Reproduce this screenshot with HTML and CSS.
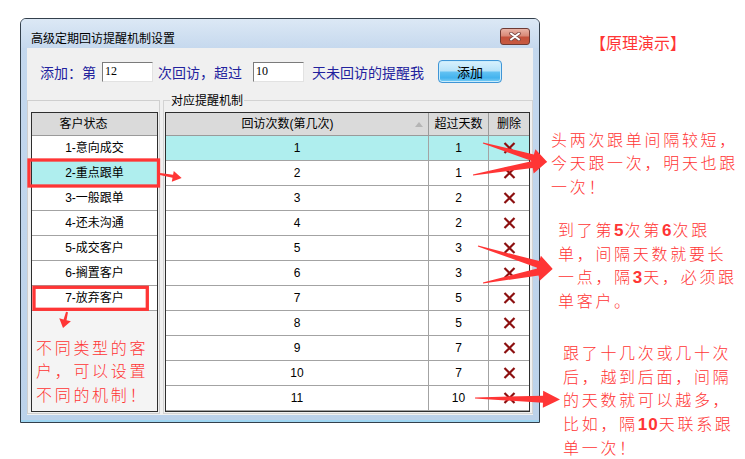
FILE: index.html
```html
<!DOCTYPE html>
<html lang="zh-CN">
<head>
    <meta charset="UTF-8">
    <title>高级定期回访提醒机制设置</title>
    <link rel="stylesheet" href="styles.css">
</head>
<body>
<div class="page">
    <div class="window">
        <div class="titlebar">
            <span class="title">高级定期回访提醒机制设置</span>
            <span class="close-btn">
                <svg width="12" height="9" viewBox="0 0 12 9">
                    <path d="M2 1.5L10 7.5M10 1.5L2 7.5" stroke="#7d4a44" stroke-width="3.6" stroke-linecap="round"/>
                    <path d="M2 1.5L10 7.5M10 1.5L2 7.5" stroke="#fff" stroke-width="2" stroke-linecap="round"/>
                </svg>
            </span>
        </div>
        <div class="client">
            <div class="add-row">
                <span>添加：第</span>
                <input class="num-input first" type="text" value="12">
                <span class="gap-a">次回访，超过</span>
                <input class="num-input second" type="text" value="10">
                <span class="gap-b">天未回访的提醒我</span>
                <button class="add-btn">添加</button>
            </div>
            <div class="panels">
                <div class="status-panel">
                    <div class="listbox">
                        <div class="lb-head">客户状态</div>
                        <div class="lb-row">1-意向成交</div>
                        <div class="lb-row selected">2-重点跟单</div>
                        <div class="lb-row">3-一般跟单</div>
                        <div class="lb-row">4-还未沟通</div>
                        <div class="lb-row">5-成交客户</div>
                        <div class="lb-row">6-搁置客户</div>
                        <div class="lb-row">7-放弃客户</div>
                        <div class="tip left-tip">不同类型的客<br>户，可以设置<br>不同的机制！</div>
                    </div>
                </div>
                <div class="group">
                    <span class="group-label">对应提醒机制</span>
                    <div class="grid">
                        <div class="grid-head">
                            <div class="cell sort-cell"><span class="head-text">回访次数(第几次)</span><span class="sort"></span></div>
                            <div class="cell">超过天数</div>
                            <div class="cell">删除</div>
                        </div>
                        <div class="grid-row selected"><div class="cell">1</div><div class="cell">1</div><div class="cell"><svg class="del" viewBox="0 0 13 12"><path d="M1.5 1L11.5 11M11.5 1L1.5 11"/></svg></div></div>
                        <div class="grid-row"><div class="cell">2</div><div class="cell">1</div><div class="cell"><svg class="del" viewBox="0 0 13 12"><path d="M1.5 1L11.5 11M11.5 1L1.5 11"/></svg></div></div>
                        <div class="grid-row"><div class="cell">3</div><div class="cell">2</div><div class="cell"><svg class="del" viewBox="0 0 13 12"><path d="M1.5 1L11.5 11M11.5 1L1.5 11"/></svg></div></div>
                        <div class="grid-row"><div class="cell">4</div><div class="cell">2</div><div class="cell"><svg class="del" viewBox="0 0 13 12"><path d="M1.5 1L11.5 11M11.5 1L1.5 11"/></svg></div></div>
                        <div class="grid-row"><div class="cell">5</div><div class="cell">3</div><div class="cell"><svg class="del" viewBox="0 0 13 12"><path d="M1.5 1L11.5 11M11.5 1L1.5 11"/></svg></div></div>
                        <div class="grid-row"><div class="cell">6</div><div class="cell">3</div><div class="cell"><svg class="del" viewBox="0 0 13 12"><path d="M1.5 1L11.5 11M11.5 1L1.5 11"/></svg></div></div>
                        <div class="grid-row"><div class="cell">7</div><div class="cell">5</div><div class="cell"><svg class="del" viewBox="0 0 13 12"><path d="M1.5 1L11.5 11M11.5 1L1.5 11"/></svg></div></div>
                        <div class="grid-row"><div class="cell">8</div><div class="cell">5</div><div class="cell"><svg class="del" viewBox="0 0 13 12"><path d="M1.5 1L11.5 11M11.5 1L1.5 11"/></svg></div></div>
                        <div class="grid-row"><div class="cell">9</div><div class="cell">7</div><div class="cell"><svg class="del" viewBox="0 0 13 12"><path d="M1.5 1L11.5 11M11.5 1L1.5 11"/></svg></div></div>
                        <div class="grid-row"><div class="cell">10</div><div class="cell">7</div><div class="cell"><svg class="del" viewBox="0 0 13 12"><path d="M1.5 1L11.5 11M11.5 1L1.5 11"/></svg></div></div>
                        <div class="grid-row"><div class="cell">11</div><div class="cell">10</div><div class="cell"><svg class="del" viewBox="0 0 13 12"><path d="M1.5 1L11.5 11M11.5 1L1.5 11"/></svg></div></div>
                    </div>
                </div>
            </div>
        </div>
    </div>

    <div class="notes">
        <div class="note-title">【原理演示】</div>
        <div class="tip note-1">头两次跟单间隔较短，<br>今天跟一次，明天也跟<br>一次！</div>
        <div class="tip note-2">到了第<b>5</b>次第<b>6</b>次跟<br>单，间隔天数就要长<br>一点，隔<b>3</b>天，必须跟<br>单客户。</div>
        <div class="tip note-3">跟了十几次或几十次<br>后，越到后面，间隔<br>的天数就可以越多，<br>比如，隔<b>10</b>天联系跟<br>单一次！</div>
    </div>

    <!-- 标注层：红框和箭头 -->
    <svg class="marks" width="745" height="459" viewBox="0 0 745 459">
        <g fill="none" stroke="#ff3535" stroke-width="3.3">
            <rect x="29" y="160" width="129.5" height="26"/>
            <rect x="34" y="287.3" width="113.3" height="22"/>
        </g>
        <g fill="#ff3535">
            <path transform="translate(160,174) rotate(10.3)" d="M0,-1 L13,-1.5 L13,-5.5 L22,0 L13,5.5 L13,1.5 L0,1Z"/>
            <path transform="translate(67,312) rotate(104)" d="M0,-1 L8,-1.5 L8,-6 L16.5,0 L8,6 L8,1.5 L0,1Z"/>
            <path transform="translate(483,143) rotate(16.5)" d="M0,-0.5 L52,-3.5 L52,-9 L67,0 L52,9 L52,3.5 L0,0.5Z"/>
            <path transform="translate(473,175) rotate(-10)" d="M0,-0.5 L60,-3.5 L60,-9 L75,0 L60,9 L60,3.5 L0,0.5Z"/>
            <path transform="translate(478,246) rotate(17)" d="M0,-0.5 L63,-3.5 L63,-9 L78,0 L63,9 L63,3.5 L0,0.5Z"/>
            <path transform="translate(483,283) rotate(-11.3)" d="M0,-0.5 L56,-3.5 L56,-9 L71,0 L56,9 L56,3.5 L0,0.5Z"/>
            <path transform="translate(475,398) rotate(1)" d="M0,-0.5 L68,-3.5 L68,-8.5 L85,0 L68,8.5 L68,3.5 L0,0.5Z"/>
        </g>
    </svg>
</div>
</body>
</html>
```

FILE: styles.css
```css
body {
    margin: 0;
    background-color: #fff;
    font-family: "Liberation Sans", "Noto Sans CJK SC", sans-serif;
}
.page {
    position: relative;
    display: flex;
    width: 745px;
    height: 459px;
    padding: 18px 0 0 20px;
    box-sizing: border-box;
    overflow: hidden;
}
.window {
    width: 520px;
    height: 405px;
    box-sizing: border-box;
    border: 1px solid #33404c;
    border-radius: 6px 6px 0 0;
    background: linear-gradient(#c4d8ee, #bcd2ea);
    box-shadow: inset 0 -2px 0 #9fd6f2;
    display: flex;
    flex-direction: column;
}
.titlebar {
    height: 29px;
    box-sizing: border-box;
    display: flex;
    justify-content: space-between;
    align-items: flex-start;
    padding: 9px 9px 0 10px;
    border-radius: 5px 5px 0 0;
    background: linear-gradient(#dce8f5, #c6d9ee);
}
.title {
    margin-top: 3px;
    font-family: "Noto Sans CJK SC", sans-serif;
    font-size: 12px;
    line-height: 14px;
    color: #000;
}
.close-btn {
    width: 30px;
    height: 17px;
    box-sizing: border-box;
    border: 1px solid #6e3a34;
    border-radius: 3px;
    background: linear-gradient(#e9b3a6 0%, #d98a78 45%, #c4513c 55%, #c75a40 100%);
    display: flex;
    align-items: center;
    justify-content: center;
}
.client {
    margin: 0 6px;
    height: 367px;
    box-sizing: border-box;
    padding-top: 12px;
    background-color: #f0f0f0;
}
.add-row {
    display: flex;
    align-items: center;
    height: 23px;
    padding-left: 13px;
    font-family: "Noto Sans CJK SC", sans-serif;
    font-size: 14px;
    color: #22229e;
    white-space: nowrap;
}
.num-input {
    width: 51px;
    height: 20px;
    box-sizing: border-box;
    margin: 0;
    padding: 0 0 0 2px;
    border: 1px solid #e2e2e2;
    border-top-color: #7b7b7b;
    border-left-color: #7b7b7b;
    background: #fff;
    font-family: "Liberation Serif", serif;
    font-size: 12px;
    color: #000;
    outline: none;
}
.num-input.first {
    margin-left: 6px;
}
.gap-a {
    margin-left: 5px;
}
.num-input.second {
    margin-left: 11px;
}
.gap-b {
    margin-left: 8px;
}
.add-btn {
    margin-left: 14px;
    width: 64px;
    height: 23px;
    box-sizing: border-box;
    padding: 0;
    border: 1px solid #3f95d6;
    border-radius: 4px;
    background: linear-gradient(#d9f1fd 0%, #b9e4fa 45%, #5fc0f2 55%, #44b3ee 80%, #7fcff6 100%);
    box-shadow: inset 0 0 0 1px #c9ecfc;
    font-family: "Noto Sans CJK SC", sans-serif;
    font-size: 13px;
    color: #000;
}
.panels {
    display: flex;
    gap: 3px;
    margin-top: 17px;
    height: 314px;
}
.status-panel {
    width: 133px;
    box-sizing: border-box;
    border: 1px solid #cfcfcf;
    padding: 11px 1px 1px 3px;
}
.listbox {
    width: 127px;
    height: 300px;
    box-sizing: border-box;
    border: 1px solid #2e2e2e;
    background-color: #f4f4f4;
}
.lb-head {
    height: 23px;
    box-sizing: border-box;
    padding-right: 22px;
    border-bottom: 1px solid #9a9a9a;
    background-color: #dadada;
    font-size: 12px;
    line-height: 22px;
    text-align: center;
    color: #000;
}
.lb-row {
    height: 25px;
    box-sizing: border-box;
    border-bottom: 1px solid #a3a3a3;
    background-color: #fff;
    font-size: 12px;
    line-height: 24px;
    text-align: center;
    color: #000;
}
.lb-row.selected,
.grid-row.selected {
    background-color: #afeeee;
}
.tip {
    font-family: "Noto Sans CJK SC", sans-serif;
    font-weight: 300;
    font-size: 16px;
    line-height: 23.5px;
    letter-spacing: 2.7px;
    color: #ff3535;
    white-space: nowrap;
}
.tip b {
    font-family: "Liberation Sans", sans-serif;
    font-weight: bold;
    font-size: 17px;
    letter-spacing: 1px;
}
.left-tip {
    margin-top: 24.75px;
    padding-left: 4px;
}
.group {
    width: 370px;
    box-sizing: border-box;
    border: 1px solid #d3d3d3;
    padding: 0 2px 1px 1px;
    display: flex;
    flex-direction: column;
    align-items: flex-start;
}
.group-label {
    margin: -7px 0 0 5px;
    padding: 0 1px;
    background-color: #f0f0f0;
    font-family: "Noto Sans CJK SC", sans-serif;
    font-size: 12px;
    line-height: 12px;
    color: #000;
}
.grid {
    margin-top: 6px;
    width: 365px;
    height: 300px;
    box-sizing: border-box;
    border: 1px solid #2e2e2e;
    background-color: #fff;
}
.grid-head,
.grid-row {
    display: grid;
    grid-template-columns: 263px 60px 40px;
    box-sizing: border-box;
    font-size: 12px;
    color: #000;
}
.grid-head {
    height: 23px;
    border-bottom: 1px solid #9a9a9a;
    background-color: #dadada;
    line-height: 22px;
}
.grid-row {
    height: 25px;
    border-bottom: 1px solid #a3a3a3;
    line-height: 24px;
}
.cell {
    display: flex;
    align-items: center;
    justify-content: center;
    border-right: 1px solid #a3a3a3;
}
.cell:last-child {
    border-right: none;
}
.grid-head .cell {
    border-right-color: #9a9a9a;
}
.sort-cell {
    padding-right: 5px;
}
.head-text {
    flex: 1;
    text-align: center;
}
.sort {
    width: 0;
    height: 0;
    margin-left: 6px;
    border-left: 4.5px solid transparent;
    border-right: 4.5px solid transparent;
    border-bottom: 5px solid #b5b5b5;
}
.del {
    width: 13px;
    height: 12px;
    fill: none;
    stroke: #8c0f0f;
    stroke-width: 2.2;
}
.notes {
    flex: 1;
    padding-top: 13px;
}
.note-title {
    margin-left: 50px;
    font-family: "Noto Sans CJK SC", sans-serif;
    font-size: 16px;
    line-height: 23.5px;
    color: #ff3535;
}
.note-1 {
    margin: 73.25px 0 0 11px;
}
.note-2 {
    margin: 19.5px 0 0 18px;
    line-height: 23px;
}
.note-3 {
    margin: 29.5px 0 0 23px;
}
.marks {
    position: absolute;
    top: 0;
    left: 0;
    pointer-events: none;
}
```
